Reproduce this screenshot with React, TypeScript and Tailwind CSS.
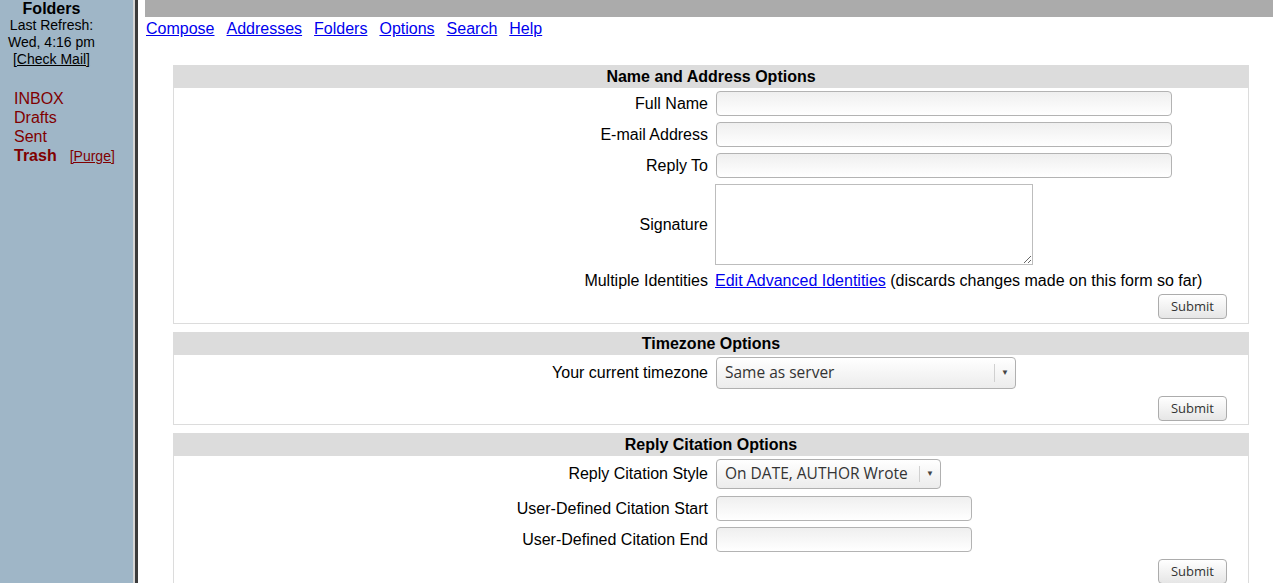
import React from "react";

const arial = { fontFamily: '"Liberation Sans", Arial, sans-serif' };

function TextInput({ width }: { width: string }) {
  return (
    <div
      className={`h-[25px] ${width} rounded-[4px] border border-[#b3b3b3] bg-gradient-to-b from-[#efefef] to-white`}
    />
  );
}

function Select({ value, width, height }: { value: string; width: string; height: string }) {
  return (
    <div
      className={`flex ${width} ${height} items-center rounded-[4px] border border-[#b0b0b0] bg-gradient-to-b from-white to-[#ececec] text-[#333]`}
    >
      <span className="flex-1 truncate pl-[8px] text-[15.5px] [font-family:'Open_Sans',sans-serif]">{value}</span>
      <span className="h-[60%] w-px bg-[#d0d0d0]" />
      <span className="w-[20px] text-center text-[8px] leading-none text-[#444]">▼</span>
    </div>
  );
}

function SubmitButton() {
  return (
    <div className="flex h-[25px] w-[69px] items-center justify-center rounded-[4px] border border-[#acacac] bg-gradient-to-b from-white to-[#e6e6e6] text-[13px] text-[#333] [font-family:'Open_Sans',sans-serif]">
      Submit
    </div>
  );
}

function Row({ label, children, className = "" }: { label: string; children: React.ReactNode; className?: string }) {
  return (
    <div className={`grid grid-cols-2 items-center ${className}`}>
      <div className="pr-[3px] text-right">{label}</div>
      <div className="pl-[5px]">{children}</div>
    </div>
  );
}

function Section({ title, children }: { title: string; children: React.ReactNode }) {
  return (
    <div className="border-x border-b border-[#dcdcdc]">
      <div className="-mx-px h-[23px] bg-[#dcdcdc] text-center font-bold leading-[23px]">{title}</div>
      {children}
    </div>
  );
}

export default function App() {
  return (
    <div className="flex h-[583px] w-[1275px] overflow-hidden bg-white text-[16px] text-black" style={arial}>
      {/* left frame */}
      <div className="h-full w-[133px] shrink-0 bg-[#9fb6c7]">
        <div className="w-[103px] text-center">
          <div className="text-[16px] font-bold leading-[17px]">Folders</div>
          <div className="text-[14px] leading-[17px]">Last Refresh:</div>
          <div className="text-[14px] leading-[17px]">Wed, 4:16 pm</div>
          <div className="text-[14px] leading-[17px]">
            <a href="#" className="text-black underline">[Check Mail]</a>
          </div>
        </div>
        <div className="mt-[21px] pl-[14px] text-[16px] leading-[19px] text-[#800000]">
          <div>INBOX</div>
          <div>Drafts</div>
          <div>Sent</div>
          <div className="flex items-baseline">
            <span className="font-bold">Trash</span>
            <a href="#" className="ml-[13px] text-[14px] text-[#800000] underline">[Purge]</a>
          </div>
        </div>
      </div>
      <div className="h-full w-[2px] shrink-0 bg-[#d6d6d6]" />
      <div className="h-full w-[3px] shrink-0 bg-[#3c3c3c]" />

      {/* right frame */}
      <div className="flex-1 pl-[7px] pr-[2px]">
        <div className="h-[17px] bg-[#ababab]" />
        <nav className="mt-[3px] flex gap-[12px] pl-[1px] leading-[18px]">
          {["Compose", "Addresses", "Folders", "Options", "Search", "Help"].map((l) => (
            <a key={l} href="#" className="text-[#0000ee] underline">
              {l}
            </a>
          ))}
        </nav>

        <div className="ml-[28px] mr-[24px] mt-[27px] flex flex-col gap-[8px]">
          <Section title="Name and Address Options">
            <div className="pt-[3px]">
              <Row label="Full Name" className="py-[3px] first:pt-0">
                <TextInput width="w-[456px]" />
              </Row>
              <Row label="E-mail Address" className="py-[3px]">
                <TextInput width="w-[456px]" />
              </Row>
              <Row label="Reply To" className="py-[3px]">
                <TextInput width="w-[456px]" />
              </Row>
              <Row label="Signature" className="py-[3px]">
                <textarea className="-ml-px block h-[81px] w-[318px] border border-[#bdbdbd] bg-white" />
              </Row>
              <Row label="Multiple Identities" className="py-[3px] leading-[19px]">
                <span className="-ml-px">
                  <a href="#" className="text-[#0000ee] underline">Edit Advanced Identities</a>{" "}
                  (discards changes made on this form so far)
                </span>
              </Row>
              <div className="flex justify-end pb-[4px] pr-[21px] pt-[1px]">
                <SubmitButton />
              </div>
            </div>
          </Section>

          <Section title="Timezone Options">
            <Row label="Your current timezone" className="pt-[2px]">
              <Select value="Same as server" width="w-[300px]" height="h-[32px]" />
            </Row>
            <div className="flex justify-end pb-[3px] pr-[21px] pt-[7px]">
              <SubmitButton />
            </div>
          </Section>

          <Section title="Reply Citation Options">
            <Row label="Reply Citation Style" className="pt-[3px]">
              <Select value="On DATE, AUTHOR Wrote" width="w-[225px]" height="h-[30px]" />
            </Row>
            <Row label="User-Defined Citation Start" className="pt-[7px]">
              <TextInput width="w-[256px]" />
            </Row>
            <Row label="User-Defined Citation End" className="pt-[6px]">
              <TextInput width="w-[256px]" />
            </Row>
            <div className="flex justify-end pb-[4px] pr-[21px] pt-[7px]">
              <SubmitButton />
            </div>
          </Section>
        </div>
      </div>
    </div>
  );
}
